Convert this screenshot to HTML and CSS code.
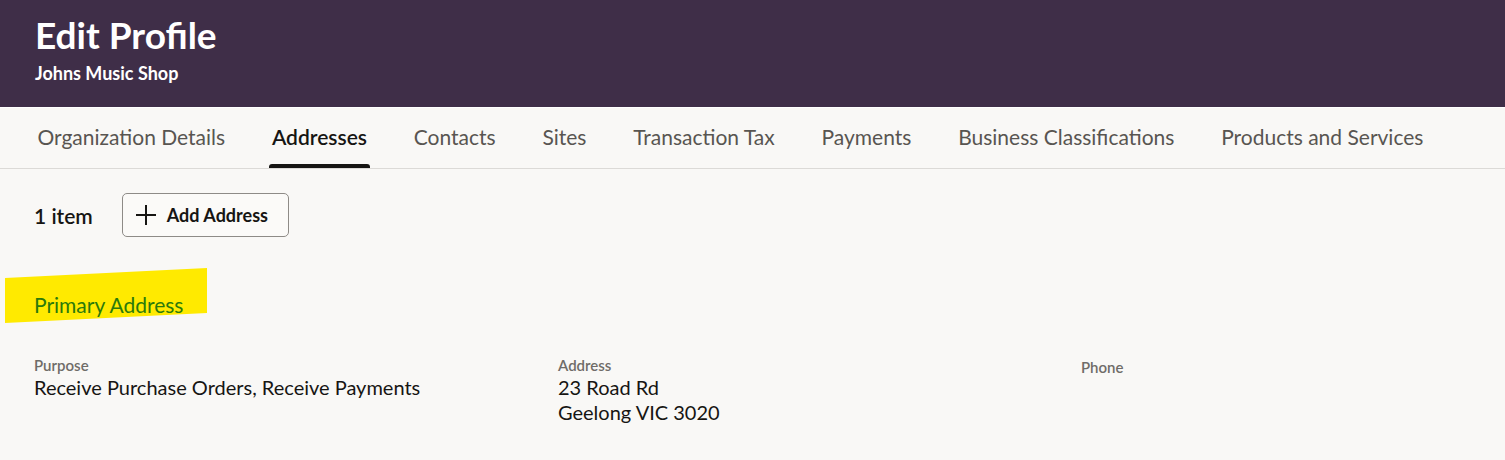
FILE: index.html
```html
<!DOCTYPE html>
<html lang="en">
<head>
    <meta charset="UTF-8">
    <meta name="viewport" content="width=device-width, initial-scale=1.0">
    <title>Edit Profile</title>
    <link rel="stylesheet" href="styles.css">
</head>
<body>
    <div class="header">
        <h1>Edit Profile</h1>
        <div class="subtitle">Johns Music Shop</div>
    </div>

    <div class="tabs">
        <div class="tab">Organization Details</div>
        <div class="tab active">Addresses</div>
        <div class="tab">Contacts</div>
        <div class="tab">Sites</div>
        <div class="tab">Transaction Tax</div>
        <div class="tab">Payments</div>
        <div class="tab">Business Classifications</div>
        <div class="tab">Products and Services</div>
    </div>

    <div class="toolbar">
        <span class="count">1 item</span>
        <button class="add-btn">
            <svg width="22" height="22" viewBox="0 0 22 22"><path d="M11 1v20M1 11h20" stroke="#161513" stroke-width="2" fill="none"/></svg>
            Add Address
        </button>
    </div>

    <div class="section-title">
        <span class="highlight"></span>
        <h2>Primary Address</h2>
    </div>

    <div class="fields">
        <div class="field">
            <div class="label">Purpose</div>
            <div class="value">Receive Purchase Orders, Receive Payments</div>
        </div>
        <div class="field">
            <div class="label">Address</div>
            <div class="value">23 Road Rd<br>Geelong VIC 3020</div>
        </div>
        <div class="field phone">
            <div class="label">Phone</div>
        </div>
    </div>
</body>
</html>
```

FILE: styles.css
```css
body {
    font-family: Lato, "Noto Sans", sans-serif;
    margin: 0;
    padding: 0;
    background-color: #f9f8f6;
    color: #161513;
}

.header {
    background-color: #3f2e48;
    color: white;
    height: 107px;
    box-sizing: border-box;
    padding: 13px 35px 0;
}

.header h1 {
    margin: 0;
    font-size: 37px;
    font-weight: bold;
    line-height: 44px;
}

.subtitle {
    font-size: 18px;
    font-weight: bold;
    margin-top: 5px;
}

.tabs {
    display: flex;
    height: 62px;
    padding-left: 14px;
    border-top: 1px solid #ffffff;
    border-bottom: 1px solid #dcdad7;
    box-sizing: border-box;
}

.tab {
    padding: 0 23.4px;
    font-size: 21px;
    color: #585551;
    line-height: 58px;
    position: relative;
}

.tab.active {
    color: #161513;
    font-weight: 600;
}

.tab.active::after {
    content: "";
    position: absolute;
    left: 20px;
    right: 20px;
    bottom: 0;
    height: 4px;
    background: #161513;
    border-radius: 3px 3px 0 0;
}

.toolbar {
    display: flex;
    align-items: center;
    padding: 24px 0 0 34px;
}

.count {
    font-size: 21px;
    font-weight: 600;
    margin-right: 29px;
}

.add-btn {
    display: flex;
    align-items: center;
    gap: 10px;
    height: 44px;
    padding: 0 20px 0 12px;
    border: 1px solid #8e8b87;
    border-radius: 5px;
    background: #fbfaf8;
    font-family: inherit;
    font-size: 18px;
    font-weight: bold;
    color: #161513;
}

.section-title {
    position: relative;
    margin-top: 31px;
    height: 56px;
}

.highlight {
    position: absolute;
    left: 5px;
    top: 0;
    width: 202px;
    height: 56px;
    background: #ffea00;
    clip-path: polygon(0 10px, 100% 0, 100% 45px, 0 55px);
}

.section-title h2 {
    position: relative;
    margin: 0;
    padding: 24px 0 0 34px;
    font-size: 21px;
    font-weight: normal;
    color: #2b7a0b;
    line-height: 26px;
}

.fields {
    display: grid;
    grid-template-columns: 524px 523px 1fr;
    padding: 32px 0 0 34px;
}

.label {
    font-size: 15px;
    font-weight: 600;
    color: #6f6c68;
    line-height: 19px;
}

.value {
    font-size: 20px;
    line-height: 25px;
    color: #161513;
}

.phone {
    padding-top: 2px;
}
```
